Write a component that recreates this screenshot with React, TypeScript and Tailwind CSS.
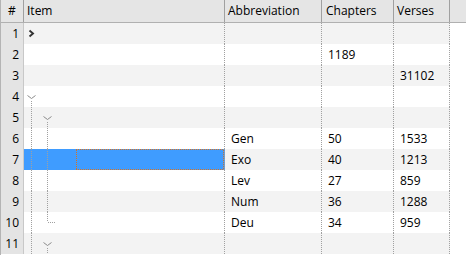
import React from "react";

type Row = {
  n: number;
  abbr?: string;
  ch?: string;
  vs?: string;
  tree: React.ReactNode;
  selected?: boolean;
};

const dot = "border-[#a0a0a0] border-dotted";
const vDots = "w-px bg-[image:repeating-linear-gradient(180deg,#a0a0a0_0_1px,transparent_1px_2px)]";
const hDots = "h-px bg-[image:repeating-linear-gradient(90deg,#a0a0a0_0_1px,transparent_1px_2px)]";
const vFocus = "w-px bg-[image:repeating-linear-gradient(180deg,#d9731f_0_1px,transparent_1px_2px)]";
const hFocus = "h-px bg-[image:repeating-linear-gradient(90deg,#d9731f_0_1px,transparent_1px_2px)]";

function LineSlot() {
  return (
    <span className="flex w-[16px] h-full shrink-0">
      <span className={`ml-[7px] h-full ${vDots}`} />
    </span>
  );
}

function ChevRightSlot() {
  return (
    <span className="flex w-[16px] h-full shrink-0">
      <svg width="16" height="21" viewBox="0 0 16 21">
        <polyline points="5.5,7.5 9,10.5 5.5,13.5" fill="none" stroke="#333333" strokeWidth="1.9" />
      </svg>
    </span>
  );
}

function ChevDownSlot() {
  return (
    <span className="flex flex-col w-[16px] h-full shrink-0">
      <svg width="16" height="15" viewBox="0 0 16 15" className="shrink-0">
        <polyline points="3.5,9.5 7.5,12.5 11.5,9.5" fill="none" stroke="#8c8c8c" strokeWidth="1" />
      </svg>
      <span className={`ml-[7px] flex-1 ${vDots}`} />
    </span>
  );
}

function LastSlot() {
  return (
    <span className="flex flex-col w-[16px] h-full shrink-0">
      <span className={`ml-[7px] h-[10px] ${vDots}`} />
      <span className={`ml-[8px] w-[8px] ${hDots}`} />
    </span>
  );
}

function FocusRect() {
  return (
    <span className="ml-[20px] flex-1 h-full flex flex-col">
      <span className={`w-full shrink-0 ${hFocus}`} />
      <span className="flex-1 flex justify-between">
        <span className={`h-full ${vFocus}`} />
        <span className={`h-full ${vFocus}`} />
      </span>
      <span className={`w-full shrink-0 ${hFocus}`} />
    </span>
  );
}

const rows: Row[] = [
  { n: 1, tree: <ChevRightSlot /> },
  { n: 2, ch: "1189", tree: null },
  { n: 3, vs: "31102", tree: null },
  { n: 4, tree: <ChevDownSlot /> },
  { n: 5, tree: <><LineSlot /><ChevDownSlot /></> },
  { n: 6, abbr: "Gen", ch: "50", vs: "1533", tree: <><LineSlot /><LineSlot /></> },
  { n: 7, abbr: "Exo", ch: "40", vs: "1213", selected: true, tree: <><LineSlot /><LineSlot /></> },
  { n: 8, abbr: "Lev", ch: "27", vs: "859", tree: <><LineSlot /><LineSlot /></> },
  { n: 9, abbr: "Num", ch: "36", vs: "1288", tree: <><LineSlot /><LineSlot /></> },
  { n: 10, abbr: "Deu", ch: "34", vs: "959", tree: <><LineSlot /><LastSlot /></> },
  { n: 11, tree: <><LineSlot /><ChevDownSlot /></> },
];

export default function App() {
  return (
    <div
      className="w-[466px] h-[255px] overflow-hidden bg-white text-[12px] text-black border-l border-[#b4b4b4]"
      style={{ fontFamily: '"Open Sans", "Noto Sans", sans-serif' }}
    >
      {/* header */}
      <div className="flex h-[23px] bg-[#e5e5e5] border-b border-[#b0b0b0] leading-[22px]">
        <div className="w-[23px] shrink-0 border-r border-[#a0a0a0] text-center">#</div>
        <div className="w-[201px] shrink-0 border-r border-[#a0a0a0] pl-[3px]">Item</div>
        <div className="w-[97px] shrink-0 border-r border-[#a0a0a0] pl-[3px]">Abbreviation</div>
        <div className="w-[72px] shrink-0 border-r border-[#a0a0a0] pl-[4px]">Chapters</div>
        <div className="w-[56px] shrink-0 border-r border-[#a0a0a0] pl-[3px]">Verses</div>
        <div className="flex-1" />
      </div>
      {rows.map((r) => {
        const bg = r.n % 2 === 1 ? "bg-[#f3f3f3]" : "bg-white";
        return (
          <div key={r.n} className="flex h-[21px] leading-[21px]">
            <div className="w-[23px] shrink-0 bg-[#e4e4e4] border-r border-[#c8c8c8] text-right pr-[4px]">
              {r.n}
            </div>
            <div
              className={`w-[201px] shrink-0 border-r ${dot} flex ${
                r.selected ? "bg-[#3f9cff]" : bg
              }`}
            >
              {r.tree}
              {r.selected && <FocusRect />}
            </div>
            <div className={`w-[97px] shrink-0 border-r ${dot} pl-[6px] ${bg}`}>{r.abbr}</div>
            <div className={`w-[72px] shrink-0 border-r ${dot} pl-[6px] ${bg}`}>{r.ch}</div>
            <div className={`w-[56px] shrink-0 border-r ${dot} pl-[6px] ${bg}`}>{r.vs}</div>
            <div className="flex-1 bg-white" />
          </div>
        );
      })}
    </div>
  );
}
